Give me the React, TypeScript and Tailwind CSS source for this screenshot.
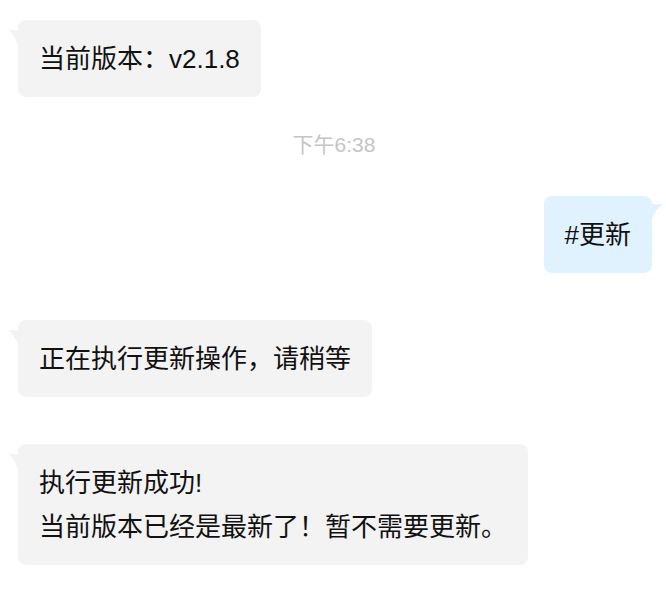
import React from 'react';

type Side = 'left' | 'right';

interface Msg {
  side: Side;
  lines: string[];
}

const font = { fontFamily: '"Liberation Sans", "Noto Sans CJK SC", sans-serif' };

const Tail: React.FC<{ side: Side }> = ({ side }) =>
  side === 'left' ? (
    <svg className="absolute left-[-10px] top-[10px]" width="11" height="20" viewBox="0 0 11 20">
      <path d="M0 0 C4 0.5 8 0.5 11 0 L11 18 C9 10 5 4 0 0 Z" fill="#f3f3f3" />
    </svg>
  ) : (
    <svg className="absolute right-[-11px] top-[8px]" width="12" height="20" viewBox="0 0 12 20">
      <path d="M12 0 C8 0.5 4 0.5 0 0 L0 18 C2 10 6 4 12 0 Z" fill="#dff2fd" />
    </svg>
  );

const Bubble: React.FC<{ msg: Msg; className?: string }> = ({ msg, className = '' }) => {
  const isLeft = msg.side === 'left';
  return (
    <div
      className={`relative rounded-[8px] px-[21px] pt-[17px] pb-[16px] text-[26px] leading-[44px] text-[#111111] ${
        isLeft ? 'self-start bg-[#f3f3f3]' : 'self-end bg-[#dff2fd]'
      } ${className}`}
    >
      <Tail side={msg.side} />
      {msg.lines.map((l, i) => (
        <div key={i} className="whitespace-nowrap">
          {l}
        </div>
      ))}
    </div>
  );
};

export default function App() {
  return (
    <div className="min-h-[594px] w-[666px] bg-white pl-[18px] pr-[14px] pt-[20px] flex flex-col" style={font}>
      <Bubble msg={{ side: 'left', lines: ['当前版本：v2.1.8'] }} />
      <div className="mt-[33px] self-center pr-[2px] text-[21px] leading-[30px] text-[#c5c5c5]">下午6:38</div>
      <Bubble msg={{ side: 'right', lines: ['#更新'] }} className="mt-[36px]" />
      <Bubble msg={{ side: 'left', lines: ['正在执行更新操作，请稍等'] }} className="mt-[47px]" />
      <Bubble
        msg={{ side: 'left', lines: ['执行更新成功!', '当前版本已经是最新了！暂不需要更新。'] }}
        className="mt-[47px]"
      />
    </div>
  );
}
